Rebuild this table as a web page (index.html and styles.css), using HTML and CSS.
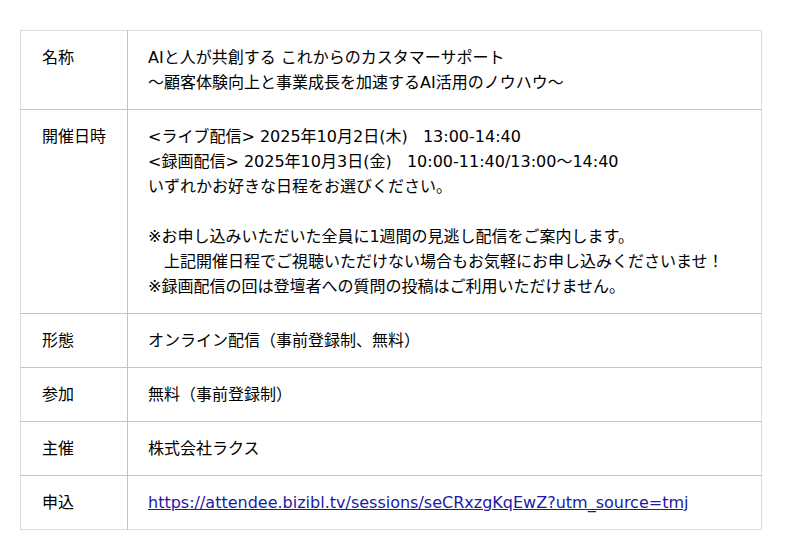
FILE: index.html
```html
<!DOCTYPE html>
<html lang="ja">
<head>
    <meta charset="UTF-8">
    <title>セミナー概要</title>
    <link rel="stylesheet" href="styles.css">
</head>
<body>
    <!-- Seminar Info Table -->
    <table class="info-table">
        <tr>
            <th>名称</th>
            <td>AIと人が共創する これからのカスタマーサポート<br>〜顧客体験向上と事業成長を加速するAI活用のノウハウ〜</td>
        </tr>
        <tr>
            <th>開催日時</th>
            <td>&lt;ライブ配信&gt; 2025年10月2日(木)&nbsp;&nbsp;&nbsp;13:00-14:40<br>&lt;録画配信&gt; 2025年10月3日(金)&nbsp;&nbsp;&nbsp;10:00-11:40/13:00〜14:40<br>いずれかお好きな日程をお選びください。<br><br>※お申し込みいただいた全員に1週間の見逃し配信をご案内します。<br>　上記開催日程でご視聴いただけない場合もお気軽にお申し込みくださいませ！<br>※録画配信の回は登壇者への質問の投稿はご利用いただけません。</td>
        </tr>
        <tr>
            <th>形態</th>
            <td>オンライン配信（事前登録制、無料）</td>
        </tr>
        <tr>
            <th>参加</th>
            <td>無料（事前登録制）</td>
        </tr>
        <tr>
            <th>主催</th>
            <td>株式会社ラクス</td>
        </tr>
        <tr>
            <th>申込</th>
            <td><a href="#">https://attendee.bizibl.tv/sessions/seCRxzgKqEwZ?utm_source=tmj</a></td>
        </tr>
    </table>
</body>
</html>
```

FILE: styles.css
```css
:root {
    --color-text: #000;
    --color-line: #c4c4c4;
    --color-outer: #dcdcdc;
    --color-link: #1a1aa6;
}

body {
    margin: 0;
    padding: 30px 20px;
    background: #fff;
    color: var(--color-text);
    font-family: "DejaVu Sans", "Noto Sans CJK JP", sans-serif;
    font-size: 16px;
    line-height: 25px;
}

/* Info Table */
.info-table {
    width: 742px;
    border-collapse: collapse;
    border: 1px solid var(--color-outer);
}

.info-table tr + tr {
    border-top: 1px solid var(--color-line);
}

.info-table th,
.info-table td {
    padding: 14px 20px;
    text-align: left;
    vertical-align: top;
    font-weight: normal;
}

.info-table th {
    width: 65px;
    padding-left: 21px;
    border-right: 1px solid var(--color-line);
}

.info-table a {
    color: var(--color-link);
}
```
